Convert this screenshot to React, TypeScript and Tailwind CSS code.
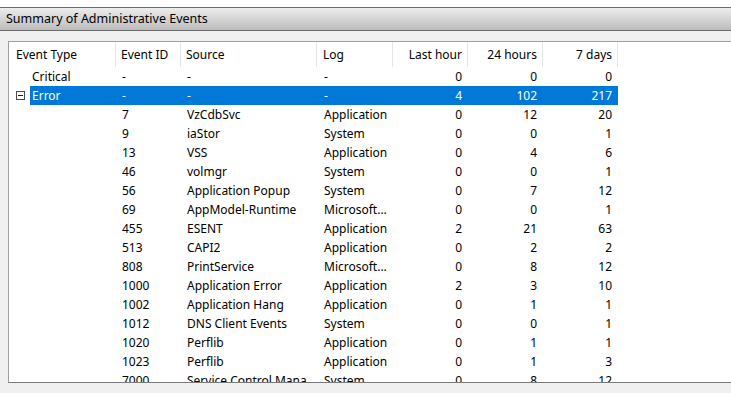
const font = { fontFamily: '"Noto Sans", "Liberation Sans", sans-serif' };

type Row = {
  type?: string;
  id: string;
  source: string;
  log: string;
  hour: string;
  day: string;
  week: string;
  expanded?: boolean;
  selected?: boolean;
};

const rows: Row[] = [
  { type: "Critical", id: "-", source: "-", log: "-", hour: "0", day: "0", week: "0" },
  { type: "Error", id: "-", source: "-", log: "-", hour: "4", day: "102", week: "217", expanded: true, selected: true },
  { id: "7", source: "VzCdbSvc", log: "Application", hour: "0", day: "12", week: "20" },
  { id: "9", source: "iaStor", log: "System", hour: "0", day: "0", week: "1" },
  { id: "13", source: "VSS", log: "Application", hour: "0", day: "4", week: "6" },
  { id: "46", source: "volmgr", log: "System", hour: "0", day: "0", week: "1" },
  { id: "56", source: "Application Popup", log: "System", hour: "0", day: "7", week: "12" },
  { id: "69", source: "AppModel-Runtime", log: "Microsoft...", hour: "0", day: "0", week: "1" },
  { id: "455", source: "ESENT", log: "Application", hour: "2", day: "21", week: "63" },
  { id: "513", source: "CAPI2", log: "Application", hour: "0", day: "2", week: "2" },
  { id: "808", source: "PrintService", log: "Microsoft...", hour: "0", day: "8", week: "12" },
  { id: "1000", source: "Application Error", log: "Application", hour: "2", day: "3", week: "10" },
  { id: "1002", source: "Application Hang", log: "Application", hour: "0", day: "1", week: "1" },
  { id: "1012", source: "DNS Client Events", log: "System", hour: "0", day: "0", week: "1" },
  { id: "1020", source: "Perflib", log: "Application", hour: "0", day: "1", week: "1" },
  { id: "1023", source: "Perflib", log: "Application", hour: "0", day: "1", week: "3" },
  { id: "7000", source: "Service Control Mana", log: "System", hour: "0", day: "8", week: "12" },
];

function MinusBox() {
  return (
    <svg width="9" height="9" viewBox="0 0 9 9" className="block">
      <rect x="0.5" y="0.5" width="8" height="8" fill="white" stroke="#4a4a4a" />
      <line x1="2" y1="4.5" x2="7" y2="4.5" stroke="#1a1a1a" />
    </svg>
  );
}

export default function App() {
  return (
    <div className="w-[731px] h-[393px] overflow-hidden bg-[#f0f0f0] text-[12px] text-black flex flex-col" style={font}>
      <div className="h-[7px] bg-white" />
      {/* title bar */}
      <div className="h-[24px] border-y border-[#6b6b6b] bg-gradient-to-b from-[#ededed] to-[#bcbcbc] pl-[6px] flex items-center">
        <span className="text-[12.5px]">Summary of Administrative Events</span>
      </div>

      <div className="flex-1 pt-[10px] pl-[8px]">
        <div className="h-[342px] w-[760px] border-l border-t border-b border-l-[#a0a0a0] border-t-[#a0a0a0] border-b-[#7a7a7a] bg-white overflow-hidden">
          {/* header */}
          <div className="grid grid-cols-[107px_65px_136px_76px_75px_75px_75px] h-[25px] leading-[25px]">
            <div className="pl-[7px] border-r border-[#e5e5e5]">Event Type</div>
            <div className="pl-[5px] border-r border-[#e5e5e5]">Event ID</div>
            <div className="pl-[5px] border-r border-[#e5e5e5]">Source</div>
            <div className="pl-[6px] border-r border-[#e5e5e5]">Log</div>
            <div className="pr-[5px] text-right border-r border-[#e5e5e5]">Last hour</div>
            <div className="pr-[5px] text-right border-r border-[#e5e5e5]">24 hours</div>
            <div className="pr-[5px] text-right border-r border-[#e5e5e5]">7 days</div>
          </div>

          {rows.map((r, i) => (
            <div key={i} className="flex h-[19px] leading-[19px]">
              <div className="w-[21px] flex items-center pl-[7px]">{r.expanded && <MinusBox />}</div>
              <div
                className={
                  "grid grid-cols-[86px_65px_136px_76px_75px_75px_75px] " +
                  (r.selected ? "bg-[#0078d7] text-white" : "")
                }
              >
                <div className="pl-[2px]">{r.type ?? ""}</div>
                <div className="pl-[6px]">{r.id}</div>
                <div className="pl-[6px] whitespace-nowrap overflow-hidden">{r.source}</div>
                <div className="pl-[7px] whitespace-nowrap overflow-hidden">{r.log}</div>
                <div className="pr-[6px] text-right">{r.hour}</div>
                <div className="pr-[6px] text-right">{r.day}</div>
                <div className="pr-[6px] text-right">{r.week}</div>
              </div>
            </div>
          ))}
        </div>
      </div>
    </div>
  );
}
